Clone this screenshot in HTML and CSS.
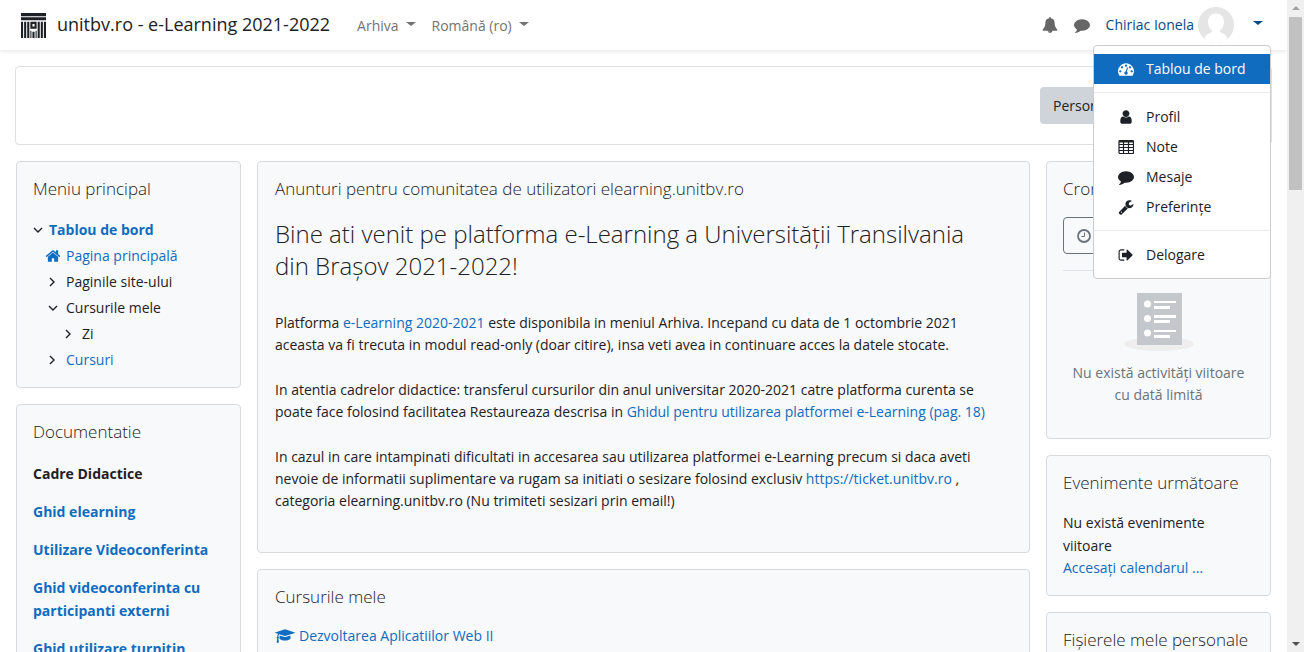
FILE: index.html
```html
<!DOCTYPE html>
<html lang="ro">
<head>
<meta charset="utf-8">
<title>unitbv.ro - e-Learning 2021-2022</title>
<link rel="stylesheet" href="styles.css">
</head>
<body>
<svg class="sprite" aria-hidden="true">
  <symbol id="comment" viewBox="0 0 1792 1792"><path d="M1792 896q0 174-120 321.500t-326 233-450 85.500q-70 0-145-8-198 175-460 242-49 14-114 22-17 2-30.500-9t-17.500-29v-1q-3-4-.5-12t2-10 4.500-9.500l6-9 7-8.500 8-9q7-8 31-34.500t34.500-38 31-39.500 32.500-51 27-59 26-76q-157-89-247.500-220t-90.500-281q0-174 120-321.500t326-233 450-85.500 450 85.500 326 233 120 321.500z"/></symbol>
  <symbol id="angle-right" viewBox="0 0 16 16"><path d="M5 4l4 4-4 4" fill="none" stroke="currentColor" stroke-width="1.400"/></symbol>
  <symbol id="angle-down" viewBox="0 0 16 16"><path d="M4 6l4 4 4-4" fill="none" stroke="currentColor" stroke-width="1.400"/></symbol>
</svg>
<div class="page">
  <header class="navbar">
    <a class="brand" href="#">
      <svg class="logo" viewBox="0 0 24 24"><path d="M0 0h24v3H0zM0 4h24v3H0zM0 8.500h2V24H0zM3 8.500h2V24H3zM6 8.500h2V24H6zM16 8.500h2V24h-2zM19 8.500h2V24h-2zM22 8.500h2V24h-2zM9 8.500h6V15H9zM9 17h1v7H9zM11 18h2v6h-2zM14 17h1v7h-1z"/><path d="M11 10.500h2v2.500h-2z" fill="#fff"/></svg>
      <span>unitbv.ro - e-Learning 2021-2022</span>
    </a>
    <nav class="nav-links">
      <a class="caret" href="#">Arhiva</a>
      <a class="caret" href="#">Română (ro)</a>
    </nav>
    <div class="user-tools">
      <button class="tool" aria-label="Notificări"><svg class="icon" viewBox="0 0 1792 1792"><path d="M912 1696q0-16-16-16-59 0-101.500-42.500t-42.500-101.500q0-16-16-16t-16 16q0 73 51.500 124.500t124.500 51.500q16 0 16-16zm816-288q0 52-38 90t-90 38h-448q0 106-75 181t-181 75-181-75-75-181h-448q-52 0-90-38t-38-90q50-42 91-88t85-119.500 74.500-158.500 50-206 19.500-260q0-152 117-282.500t307-158.500q-8-19-8-39 0-40 28-68t68-28 68 28 28 68q0 20-8 39 190 28 307 158.500t117 282.500q0 139 19.500 260t50 206 74.500 158.500 85 119.500 91 88z"/></svg></button>
      <button class="tool" aria-label="Mesaje"><svg class="icon"><use href="#comment"/></svg></button>
      <div class="usermenu">
        <a class="user caret" href="#"><span>Chiriac Ionela</span><svg class="avatar" viewBox="0 0 36 36"><circle cx="18" cy="18" r="18" fill="#e5e5e5"/><path fill="#fff" d="M18 6.500c-5 0-8 3.500-8 8.500 0 4 1.500 7 4 8.500v1.500c-3 1.500-6.500 2.500-7.500 6.500C9 34.500 13.500 36 18 36s9-1.500 11.500-4.500c-1-4-4.500-5-7.500-6.500v-1.500c2.500-1.500 4-4.500 4-8.500 0-5-3-8.500-8-8.500z"/></svg></a>
        <div class="menu">
          <a class="active" href="#"><svg class="icon" viewBox="0 0 1792 1792"><path d="M384 1152q0-53-37.500-90.500t-90.500-37.500-90.500 37.500-37.500 90.500 37.500 90.500 90.500 37.500 90.500-37.500 37.500-90.500zm192-448q0-53-37.500-90.500t-90.500-37.500-90.500 37.500-37.500 90.500 37.500 90.500 90.500 37.500 90.500-37.500 37.500-90.500zm428 481l101-382q6-26-7.500-48.500t-38.500-29.500-48 6.500-30 39.500l-101 382q-60 5-107 43.500t-63 98.500q-20 77 20 146t117 89 146-20 89-117q16-60-6-117t-72-91zm660-33q0-53-37.500-90.500t-90.500-37.500-90.500 37.500-37.500 90.500 37.500 90.500 90.500 37.500 90.500-37.500 37.500-90.500zm-640-640q0-53-37.500-90.500t-90.500-37.500-90.500 37.500-37.500 90.500 37.500 90.500 90.500 37.500 90.500-37.500 37.500-90.500zm448 192q0-53-37.500-90.500t-90.500-37.500-90.500 37.500-37.500 90.500 37.500 90.500 90.500 37.500 90.500-37.500 37.500-90.500zm320 448q0 261-141 483-19 29-54 29h-1402q-35 0-54-29-141-221-141-483 0-182 71-348t191-286 286-191 348-71 348 71 286 191 191 286 71 348z"/></svg>Tablou de bord</a>
          <hr>
          <a href="#"><svg class="icon" viewBox="0 0 1792 1792"><path d="M1536 1399q0 109-62.500 187t-150.500 78h-854q-88 0-150.500-78t-62.500-187q0-85 8.500-160.500t31.500-152 58.500-131 94-89 134.500-34.500q131 128 313 128t313-128q76 0 134.500 34.500t94 89 58.500 131 31.500 152 8.500 160.500zm-256-887q0 159-112.500 271.500t-271.500 112.500-271.500-112.500-112.500-271.500 112.500-271.500 271.500-112.500 271.500 112.500 112.500 271.500z"/></svg>Profil</a>
          <a href="#"><svg class="icon" viewBox="0 0 16 16"><path d="M2 1.500h12.500a1 1 0 0 1 1 1v11a1 1 0 0 1-1 1H2a1 1 0 0 1-1-1v-11a1 1 0 0 1 1-1zM1 5.500h14.500M1 8.500h14.500M1 11.500h14.500M5.500 3v11M10.500 3v11" fill="none" stroke="currentColor" stroke-width="1.200"/><path d="M1 2h14.500v1.500H1z"/></svg>Note</a>
          <a href="#"><svg class="icon"><use href="#comment"/></svg>Mesaje</a>
          <a href="#"><svg class="icon" viewBox="0 0 1792 1792"><path d="M448 1472q0-26-19-45t-45-19-45 19-19 45 19 45 45 19 45-19 19-45zm644-420l-682 682q-37 37-90 37-52 0-91-37l-106-108q-38-36-38-90 0-53 38-91l681-681q39 98 114.500 173.500t173.500 114.500zm634-435q0 39-23 106-47 134-164.500 217.500t-258.500 83.500q-185 0-316.500-131.500t-131.500-316.500 131.500-316.500 316.500-131.500q58 0 121.500 16.500t107.500 46.500q16 11 16 28t-16 28l-293 169v224l193 107q5-3 79-48.500t135.500-81 70.500-35.500q15 0 23.500 10t8.500 25z"/></svg>Preferințe</a>
          <hr>
          <a href="#"><svg class="icon" viewBox="0 0 1792 1792"><path d="M704 1440q0 4 1 20t.5 26.500-3 23.500-10 19.500-20.500 6.500h-320q-119 0-203.500-84.500t-84.500-203.500v-704q0-119 84.500-203.500t203.500-84.500h320q13 0 22.500 9.500t9.500 22.500q0 4 1 20t.5 26.500-3 23.500-10 19.500-20.500 6.500h-320q-66 0-113 47t-47 113v704q0 66 47 113t113 47h312l11.500 1 11.500 3 8 5.500 7 9 2 13.500zm928-544q0 26-19 45l-544 544q-19 19-45 19t-45-19-19-45v-288h-448q-26 0-45-19t-19-45v-384q0-26 19-45t45-19h448v-288q0-26 19-45t45-19 45 19l544 544q19 19 19 45z"/></svg>Delogare</a>
        </div>
      </div>
    </div>
  </header>

  <main class="content">
    <div class="page-header"><button class="customise">Personalizare pagină</button></div>
    <div class="columns">
      <aside class="column">
        <section class="card">
          <h2>Meniu principal</h2>
          <ul class="tree">
            <li><a class="node current" href="#"><svg class="arrow"><use href="#angle-down"/></svg>Tablou de bord</a>
              <ul>
                <li><a class="node" href="#"><svg class="arrow" viewBox="0 0 1792 1792"><path d="M1472 992v480q0 26-19 45t-45 19h-384v-384h-256v384h-384q-26 0-45-19t-19-45v-480q0-1 .5-3t.5-3l575-474 575 474q1 2 1 6zm223-69l-62 74q-8 9-21 11h-3q-13 0-21-7l-692-577-692 577q-12 8-24 7-13-2-21-11l-62-74q-8-10-7-23.500t11-21.500l719-599q32-26 76-26t76 26l244 204v-195q0-14 9-23t23-9h192q14 0 23 9t9 23v408l219 182q10 8 11 21.500t-7 23.500z"/></svg>Pagina principală</a></li>
                <li><span class="node"><svg class="arrow"><use href="#angle-right"/></svg>Paginile site-ului</span></li>
                <li><span class="node"><svg class="arrow"><use href="#angle-down"/></svg>Cursurile mele</span>
                  <ul><li><span class="node"><svg class="arrow"><use href="#angle-right"/></svg>Zi</span></li></ul>
                </li>
                <li><a class="node" href="#"><svg class="arrow dark"><use href="#angle-right"/></svg>Cursuri</a></li>
              </ul>
            </li>
          </ul>
        </section>
        <section class="card docs">
          <h2>Documentatie</h2>
          <p>Cadre Didactice</p>
          <p><a href="#">Ghid elearning</a></p>
          <p><a href="#">Utilizare Videoconferinta</a></p>
          <p><a href="#">Ghid videoconferinta cu participanti externi</a></p>
          <p><a href="#">Ghid utilizare turnitin</a></p>
        </section>
      </aside>

      <div class="column">
        <section class="card news">
          <h2>Anunturi pentru comunitatea de utilizatori elearning.unitbv.ro</h2>
          <h1>Bine ati venit pe platforma e-Learning a Universității Transilvania <br>din Brașov 2021-2022!</h1>
          <p>Platforma <a href="#">e-Learning 2020-2021</a> este disponibila in meniul Arhiva. Incepand cu data de 1 octombrie 2021 <br>aceasta va fi trecuta in modul read-only (doar citire), insa veti avea in continuare acces la datele stocate.</p>
          <p>In atentia cadrelor didactice: transferul cursurilor din anul universitar 2020-2021 catre platforma curenta se <br>poate face folosind facilitatea Restaureaza descrisa in <a href="#">Ghidul pentru utilizarea platformei e-Learning (pag. 18)</a></p>
          <p>In cazul in care intampinati dificultati in accesarea sau utilizarea platformei e-Learning precum si daca aveti <br>nevoie de informatii suplimentare va rugam sa initiati o sesizare folosind exclusiv <a href="#">https://ticket.unitbv.ro</a> , <br>categoria elearning.unitbv.ro (Nu trimiteti sesizari prin email!)</p>
        </section>
        <section class="card">
          <h2>Cursurile mele</h2>
          <a class="course" href="#"><svg class="cap" viewBox="0 0 2304 1792"><path d="M1774 836l18 316q4 69-82 128t-235 93.500-323 34.500-323-34.500-235-93.500-82-128l18-316 574 181q22 7 48 7t48-7zm530-324q0 23-22 31l-1120 352q-4 1-10 1t-10-1l-652-206q-43 34-71 111.500t-34 178.500q63 36 63 109 0 69-58 107l58 433q2 14-8 25-9 11-24 11h-192q-15 0-24-11-10-11-8-25l58-433q-58-38-58-107 0-73 65-111 11-207 98-330l-333-104q-22-8-22-31t22-31l1120-352q4-1 10-1t10 1l1120 352q22 8 22 31z"/></svg>Dezvoltarea Aplicatiilor Web II</a>
        </section>
      </div>

      <aside class="column">
        <section class="card timeline">
          <h2>Cronologie</h2>
          <div class="filters"><button class="filter" aria-label="Filtru după dată"><svg class="icon" viewBox="0 0 16 16"><g fill="none" stroke="currentColor"><circle cx="8" cy="8" r="6" stroke-width="1.800"/><path d="M8.500 4.500v4H5.500"/></g></svg></button></div>
          <div class="empty">
            <svg class="list-art" viewBox="0 0 70 60"><ellipse cx="35" cy="52" rx="35" ry="7" fill="#eee"/><path fill="#c4c7cb" d="M13 1h45v52H13z"/><g fill="#fff"><circle cx="23.500" cy="12" r="3.500"/><circle cx="23.500" cy="26.500" r="3.500"/><circle cx="23.500" cy="41" r="3.500"/><path d="M30 9h22v2H30zM30 14h16v3H30zM30 23h22v3H30zM30 28h16v3H30zM30 38h22v2H30zM30 43h16v3H30z"/></g></svg>
            <p>Nu există activități viitoare <br>cu dată limită</p>
          </div>
        </section>
        <section class="card events">
          <h2>Evenimente următoare</h2>
          <p>Nu există evenimente viitoare</p>
          <a href="#">Accesați calendarul ...</a>
        </section>
        <section class="card"><h2>Fișierele mele personale</h2></section>
      </aside>
    </div>
  </main>
</div>
<div class="scrollbar" aria-hidden="true"><span class="up"></span><span class="track"><span class="thumb"></span></span><span class="down"></span></div>
</body>
</html>
```
FILE: styles.css
```css
* { box-sizing: border-box; }
body {
  margin: 0;
  display: flex;
  height: 100vh;
  overflow: hidden;
  background: #fff;
  color: #1d2125;
  font: 14px/22px "Open Sans", "Noto Sans", sans-serif;
}
a { color: #0f6cbf; text-decoration: none; }
button { font: inherit; cursor: pointer; }
h1, h2, p, ul { margin: 0; padding: 0; }
ul { list-style: none; }
svg { fill: currentColor; flex: none; }
.sprite { position: absolute; width: 0; height: 0; }
.icon { width: 16px; height: 16px; display: block; }

.page { flex: 1; min-width: 0; }

.navbar {
  display: flex;
  align-items: center;
  height: 50px;
  padding: 0 24px 0 21px;
  background: #fff;
  box-shadow: 0 2px 4px rgba(0, 0, 0, .08);
}
.brand { display: flex; align-items: center; gap: 11px; color: #1d2125; font-size: 18px; }
.brand span { padding-bottom: 3px; }
.logo { width: 25px; height: 25px; }
.nav-links { display: flex; gap: 16px; margin-left: 27px; padding-top: 1px; }
.nav-links a { color: #737373; }
.caret { display: flex; align-items: center; }
.caret::after {
  content: "";
  margin: 0 0 3px 7px;
  border: solid transparent;
  border-width: 4px 5px 0;
  border-top-color: currentColor;
}
.user-tools { display: flex; align-items: center; margin-left: auto; }
.tool { padding: 0; margin-right: 16px; border: 0; background: none; color: #666; }
.usermenu { position: relative; }
.user { color: #0a4a84; }
.user.caret::after { margin: 0 0 5px 19px; }
.avatar { width: 36px; height: 36px; margin-left: 4px; }
.menu {
  position: absolute;
  z-index: 2;
  top: 38px;
  right: -8px;
  width: 178px;
  padding: 8px 0;
  border: 1px solid #ccc;
  border-radius: 4px;
  background: #fff;
}
.menu a { display: flex; align-items: center; gap: 12px; height: 30px; padding: 0 24px; color: #1d2125; white-space: nowrap; }
.menu a.active { background: #0f6cbf; color: #fff; }
.menu hr { margin: 8px 0 9px; border: 0; border-top: 1px solid #e9ecef; }

.content { padding: 16px 15px 0; }
.page-header {
  display: flex;
  justify-content: flex-end;
  padding: 20px;
  border: 1px solid #dee0e2;
  border-radius: 4px;
}
.customise { height: 37px; padding: 0 13px; border: 0; border-radius: 4px; background: #ced4da; color: #1d2125; width: 211px; text-align: left; white-space: nowrap; }
.columns { display: grid; grid-template-columns: 225px minmax(0, 1fr) 225px; gap: 16px; padding: 16px 1px 0; }
.column { display: flex; flex-direction: column; gap: 16px; min-width: 0; }
.card { padding: 16px; border: 1px solid #d8dadd; border-radius: 4px; background: #f8f9fa; }
.card h2 { margin-bottom: 17px; font-size: 17px; line-height: 22px; font-weight: 300; white-space: nowrap; }

.tree { margin-bottom: -2px; }
.tree ul { padding-left: 12px; }
.tree ul ul { padding-left: 16px; }
.node { display: flex; align-items: center; gap: 4px; line-height: 26px; }
.node .arrow { width: 16px; height: 16px; }
.tree ul .node { gap: 5px; }
.tree > li > .node { margin-left: -3px; gap: 3px; }
.current { font-weight: 700; }
.current .arrow, .dark { color: #1d2125; }
.docs { font-weight: 700; }
.docs h2 { margin-bottom: 19px; }
.docs p { margin-bottom: 15px; line-height: 23px; }

.news { padding: 16px 17px 40px; }
.news + .card { padding-left: 17px; }
.news h2 { margin-bottom: 18px; }
.news h1 { margin-bottom: 30px; font-size: 24px; line-height: 32px; font-weight: 300; }
.news p + p { margin-top: 23px; }
.course { display: flex; align-items: center; gap: 4px; }
.cap { width: 20px; height: 16px; }

.timeline { padding-bottom: 32px; }
.filters { padding-bottom: 16px; border-bottom: 1px solid #dee2e6; }
.filter { display: block; height: 37px; padding: 0 12px; border: 1px solid #6a737b; border-radius: 4px; background: none; color: #6a737b; width: 60px; }
.empty { padding-top: 21px; text-align: center; color: #6a737b; white-space: nowrap; }
.list-art { width: 70px; height: 60px; display: block; margin: 0 auto 10px; }
.events p { line-height: 23px; }

.scrollbar { display: flex; flex-direction: column; align-items: center; justify-content: space-between; width: 17px; padding: 6px 2px; background: #f0f0f0; }
.up, .down { border: 4px solid transparent; }
.up { border-top: 0; border-bottom-color: #a3a3a3; }
.down { border-bottom: 0; border-top-color: #505050; }
.track { flex: 1; width: 100%; padding: 7px 0; }
.thumb { display: block; height: 28%; background: #c1c1c1; }
```
